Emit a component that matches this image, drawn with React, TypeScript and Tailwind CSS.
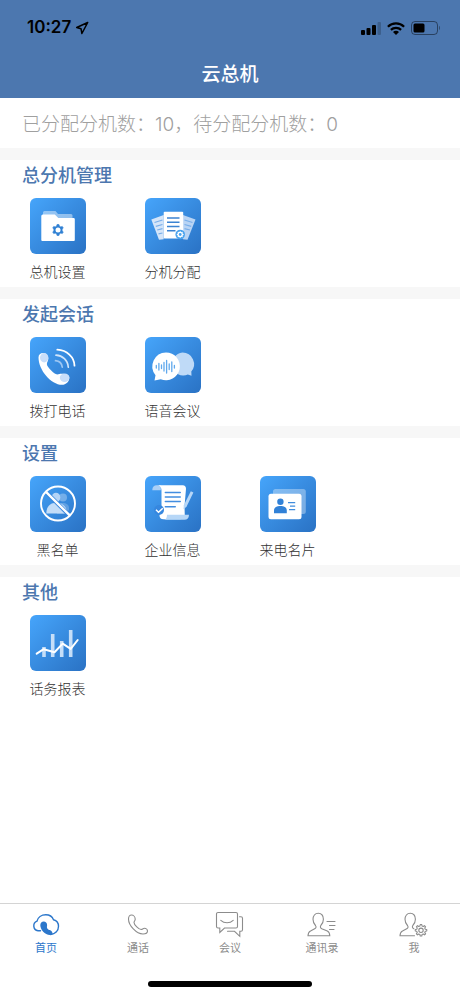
import { useState } from 'react'
import type { ReactNode } from 'react'

function gearPoints(cx: number, cy: number, outer: number, inner: number, teeth: number) {
  const step = (Math.PI * 2) / teeth
  const points: string[] = []
  for (let i = 0; i < teeth; i++) {
    const a = i * step - Math.PI / 2
    const corners = [
      [a - step * 0.3, inner],
      [a - step * 0.17, outer],
      [a + step * 0.17, outer],
      [a + step * 0.3, inner],
    ]
    corners.forEach(([angle, r]) => {
      points.push(`${(cx + Math.cos(angle) * r).toFixed(2)},${(cy + Math.sin(angle) * r).toFixed(2)}`)
    })
  }
  return points.join(' ')
}

const folderIcon = (
  <>
    <path d="M13 20v-5.5a1.5 1.5 0 0 1 1.5-1.5h11l2.5 3h13a1.5 1.5 0 0 1 1.5 1.5V22H13z" fill="#fff" opacity=".45" />
    <path d="M11.3 18a1.5 1.5 0 0 1 1.5-1.5h12l3.5 3.5h15.2a1.3 1.3 0 0 1 1.3 1.3V42a1 1 0 0 1-1 1H12.3a1 1 0 0 1-1-1z" fill="#fff" />
    <polygon points={gearPoints(28, 32, 5.6, 4.2, 6)} fill="#2f80d3" stroke="#2f80d3" strokeWidth=".6" strokeLinejoin="round" />
    <circle cx="28" cy="32" r="2.5" fill="#fff" />
  </>
)

const sheetsIcon = (
  <>
    <path d="M6.3 21.5 18.7 17v24.3l-4.7.5z" fill="#d4e5f9" />
    <path d="M50.5 21.5 38 17v24.3l4.5.5z" fill="#b9d4f4" />
    <path d="m9.5 24.5 8-2.5M10.8 28.3l6.7-1.8M12.2 32l5.3-1.3M13.5 35.8l4-.8M47.5 24.5l-8-2.5M46.2 28.3l-6.7-1.8M45 32l-5.5-1.3" stroke="#78aeea" strokeWidth="1.2" />
    <rect x="18.7" y="13.7" width="19.5" height="26.8" rx="1" fill="#fff" />
    <path d="M22 20h12.5M22 24.3h12.5M22 28.5h12.5M22 32.8h8.5" stroke="#3b83d2" strokeWidth="1.5" />
    <circle cx="35.2" cy="36.5" r="4.8" fill="#4aa3ee" />
    <polygon points={gearPoints(35.2, 36.5, 3.4, 2.7, 8)} fill="#fff" />
    <circle cx="35.2" cy="36.5" r="1.4" fill="#4aa3ee" />
  </>
)

const callIcon = (
  <>
    <path d="M8.5 20.5c0-3 2-4.500 4.500-4.500 3 0 5.300 2.500 5.300 5.500 0 2-.8 3-1.300 4.500-.5 1.700.5 3.500 2.500 5.700 2.300 2.500 4.800 5 6.800 5.600 2 .5 3.200-.6 5.200-.6 4 0 7.800.8 7.800 4 0 3.800-3.300 7.100-7.300 7.100C21 47.800 8.500 33 8.500 20.500z" fill="#fff" />
    <ellipse cx="14.2" cy="20.8" rx="4.2" ry="4.7" fill="#c9defa" />
    <ellipse cx="34.6" cy="40.8" rx="4.8" ry="4.2" fill="#c9defa" />
    <path d="M27.3 12.7c9.5.5 17 7.3 17.2 16" stroke="#fff" strokeWidth="1.8" strokeLinecap="round" />
    <path d="M26 18.2c6.500.3 11.800 5 12.300 12" stroke="#d2e5fa" strokeWidth="1.7" strokeLinecap="round" />
    <path d="M25.5 23.7c3.500.3 6.300 2.800 6.800 6.500" stroke="#9cc6f3" strokeWidth="1.7" strokeLinecap="round" />
  </>
)

const voiceIcon = (
  <>
    <path d="M37.5 15.5a11.5 11.5 0 0 1 8.800 18.900l.2 4.400-3.700-1.200A11.5 11.5 0 1 1 37.500 15.500z" fill="#bfdaf7" />
    <path d="M21 15.5a13.9 13.9 0 1 1-5.200 26.800l-6.300 1.200 1-5.300A13.9 13.9 0 0 1 21 15.5z" fill="#fff" />
    <path d="M11.3 28.5v2.500M13.900 26.500v6.500M16.500 28v3.500M19 25.500v8.500M21.600 23.500v12.500M24.200 27v5.500M26.800 25v9.500M29.400 28.500v2.500" stroke="#60a9ed" strokeWidth="1.3" strokeLinecap="round" />
  </>
)

const blockIcon = (
  <>
    <circle cx="33" cy="21.5" r="4" fill="#fff" opacity=".3" />
    <path d="M27 38v-6c0-3.500 3-5 6-5s6 1.500 6 5v2a14 14 0 0 1-4 4z" fill="#fff" opacity=".22" />
    <ellipse cx="26" cy="21.5" rx="4.3" ry="4.8" fill="#b5d4f6" />
    <path d="M16.3 37.500c0-6.500 3.500-10.700 10-10.700s10.700 4.200 10.700 10.700z" fill="#c3ddf8" />
    <path d="M17 17 39 39" stroke="#3685dc" strokeWidth="4" />
    <circle cx="28" cy="27.5" r="17" stroke="#fff" strokeWidth="1.9" />
    <path d="M15.7 15.7 40 39.7" stroke="#fff" strokeWidth="2.4" />
  </>
)

const scrollIcon = (
  <>
    <path d="M7.3 14.2c0-3 1.700-4.900 4.500-4.900h4v4.900z" fill="#a9cff6" />
    <path d="M13.3 9.3h24.500c2 0 3.200 1.300 3.200 3.500l-1.500 17.500.3 9.500-4.300 3.500H18.500c-2.700 0-4-1.600-4-4V37l2-3V14.500c0-2.500-1-4.500-3.200-5.200z" fill="#fff" />
    <path d="M22 38.700h22c0 3.200-1.800 5-4.500 5H18.500c2.500 0 3.500-2 3.500-5z" fill="#b7d7f7" />
    <path d="M20.3 16.500h15M20.300 21h15M20.300 25.500h15M20.300 30.700h10" stroke="#428de0" strokeWidth="1.4" strokeLinecap="round" />
    <path d="m45.800 15.300 2.600 1.200-6.900 14.300-3 2.400.3-3.900z" fill="#b7d7f7" />
    <circle cx="14" cy="34" r="5" fill="#3687df" />
    <path d="m11 33.800 2.500 2.400 4.300-4" stroke="#fff" strokeWidth="1.5" />
  </>
)

const cardIcon = (
  <>
    <rect x="13" y="13" width="32.8" height="25" rx="2.5" fill="#fff" opacity=".35" />
    <rect x="8.5" y="17.7" width="33" height="25.5" rx="2.5" fill="#fff" />
    <circle cx="20.4" cy="25.7" r="3.2" fill="#3181d7" />
    <path d="M14 37.2v-2.700c0-3 2.700-4.500 6.400-4.500s6.400 1.500 6.400 4.500v2.700z" fill="#3181d7" />
    <path d="M28 26.700h7.200M30 30.200h5.200M29 33.700h6.200" stroke="#3f8cdd" strokeWidth="1.3" />
  </>
)

const chartIcon = (
  <>
    <path d="M14 32v10M22.700 19v23M31.700 26v16M40.700 15v27" stroke="#c5def8" strokeWidth="3.6" />
    <path d="m6.700 38.700 7-4.500 10.800 3 8.200-8.600 8 5.300 7-8.900" stroke="#fff" strokeWidth="2" strokeLinejoin="round" strokeLinecap="round" />
  </>
)

interface Feature {
  label: string
  icon: ReactNode
}

const SECTIONS: { title: string; items: Feature[] }[] = [
  {
    title: '总分机管理',
    items: [
      { label: '总机设置', icon: folderIcon },
      { label: '分机分配', icon: sheetsIcon },
    ],
  },
  {
    title: '发起会话',
    items: [
      { label: '拨打电话', icon: callIcon },
      { label: '语音会议', icon: voiceIcon },
    ],
  },
  {
    title: '设置',
    items: [
      { label: '黑名单', icon: blockIcon },
      { label: '企业信息', icon: scrollIcon },
      { label: '来电名片', icon: cardIcon },
    ],
  },
  {
    title: '其他',
    items: [{ label: '话务报表', icon: chartIcon }],
  },
]

const personPath =
  'M8.500 14.500C7 13 6 11 6 8.300 6 4.800 8 2.300 11.200 2.300s5.200 2.500 5.200 6c0 2.700-1 4.700-2.600 6.200-.8 1.300-.4 2.500 1 3.200'

const TABS: Feature[] = [
  {
    label: '首页',
    icon: (
      <>
        <path d="M9.5 19.800H7A5 5 0 0 1 6 10.200C6.800 6.300 10.500 3.700 14.800 3.700c3.700 0 6.500 1.900 7.700 5 3.200.8 5 3.300 5 6.600 0 4.800-3.500 7.700-8 8.200" strokeWidth="1.4" />
        <path d="M9.3 14.300c0-2.300 1.500-3.700 3.400-3.700s3.400 1.500 3.400 3.400c0 1.500-.5 2.300.2 3.400.6.9 1.400 1.300 2.500 1.700 2 .8 3 2.500 2.600 4.400-5.900 2.300-12.100-4.300-12.100-9.200z" fill="currentColor" stroke="none" />
      </>
    ),
  },
  {
    label: '通话',
    icon: (
      <path d="M5.5 8c0-2.500 1.200-4 3-4 2 0 3.700 2 3.700 4.200 0 1.500-1.200 2-1.200 3.300 0 2.200 5 7 7.200 7 1.200 0 1.800-1.200 3.300-1.200 1.500 0 3 1.300 3 2.700 0 1.800-2 3-4.500 3C13.500 23 5.500 14.500 5.500 8z" />
    ),
  },
  {
    label: '会议',
    icon: (
      <>
        <path d="M3 1.500h18a1.500 1.500 0 0 1 1.500 1.500v12.500A1.500 1.500 0 0 1 21 17H9.500l-4.700 4.500V17H3a1.500 1.500 0 0 1-1.500-1.500V3A1.500 1.500 0 0 1 3 1.500z" />
        <path d="M5.800 9.300c3.500 3.200 9 3.200 12.400 0M24.500 5.800H26a1.500 1.500 0 0 1 1.500 1.500v11.500a1.500 1.500 0 0 1-1.500 1.500h-1.200v5l-5.300-5h-7" />
      </>
    ),
  },
  {
    label: '通讯录',
    icon: (
      <>
        <path d={personPath + 'l5.500 2.300c1.700.8 2.400 2 2.500 4.700H1c.1-2.700.8-3.900 2.500-4.700L7.700 17.700c1.400-.7 1.800-1.900.8-3.200'} />
        <path d="M20 10.500h8M22.500 14.500H28M22.500 18.500H27" />
      </>
    ),
  },
  {
    label: '我',
    icon: (
      <>
        <path d={personPath} />
        <path d="M15.500 24.700H1c.1-2.700.8-3.900 2.500-4.700l4.200-2.300c1.400-.7 1.800-1.900.8-3.200" />
        <polygon points={gearPoints(22, 19.3, 5.8, 4.4, 8)} strokeLinejoin="round" />
        <circle cx="22" cy="19.3" r="2.2" />
      </>
    ),
  },
]

function StatusBar() {
  return (
    <div className="flex h-14 items-center justify-between pr-5 pl-[27px] text-black">
      <div className="flex items-center gap-1">
        <span className="font-[Inter] text-[17px] font-semibold">10:27</span>
        <svg width="14" height="14" viewBox="0 0 14 14" fill="none" stroke="currentColor" strokeWidth="1.5" strokeLinejoin="round">
          <path d="M12.700 1.500 1.700 6.500l4.300 1.200.9 4.800z" />
        </svg>
      </div>
      <div className="flex items-center gap-1.5">
        <svg width="20" height="13" viewBox="0 0 20 13" fill="currentColor">
          <rect y="8" width="4" height="5" rx="1" />
          <rect x="5.5" y="6" width="4" height="7" rx="1" />
          <rect x="11" y="3" width="4" height="10" rx="1" />
          <rect x="16.5" width="3.5" height="13" rx="1" opacity=".2" />
        </svg>
        <svg width="18" height="13" viewBox="0 0 18 13" fill="none" stroke="currentColor" strokeWidth="2.2">
          <path d="M.9 4.700a11.500 11.500 0 0 1 16.200 0M3.900 7.900a7.200 7.200 0 0 1 10.200 0" />
          <path d="M6 10a4.200 4.200 0 0 1 6 0l-3 3z" fill="currentColor" stroke="none" />
        </svg>
        <svg width="29" height="14" viewBox="0 0 29 14" fill="currentColor">
          <rect x=".5" y=".5" width="26" height="13" rx="3.5" fill="none" stroke="currentColor" opacity=".45" />
          <rect x="2.5" y="2.5" width="11" height="9" rx="1.5" />
          <path d="M28 4.800c1 .6 1 3.800 0 4.400z" opacity=".5" />
        </svg>
      </div>
    </div>
  )
}

function FeatureButton({ label, icon }: Feature) {
  return (
    <button type="button" className="flex flex-col items-center gap-[7px]">
      <span className="size-14 rounded-md bg-linear-to-br from-[#46a5fb] to-[#2a72c4]">
        <svg className="size-14" viewBox="0 0 56 56" fill="none">
          {icon}
        </svg>
      </span>
      <span className="text-[14px] leading-5 font-light text-[#333]">{label}</span>
    </button>
  )
}

export default function App() {
  const [active, setActive] = useState('首页')

  return (
    <div className="flex min-h-screen flex-col bg-white font-['Noto_Sans_CJK_SC',sans-serif]">
      <header className="bg-[#4c77af]">
        <StatusBar />
        <h1 className="pt-[3px] pb-[11px] text-center text-[19px] leading-7 font-medium text-white">云总机</h1>
      </header>

      <main className="flex-1">
        <p className="px-[22px] pt-1 font-[Inter,'Noto_Sans_CJK_SC',sans-serif] text-[19px] leading-[46px] font-light text-[#a0a0a0]">
          已分配分机数：10，待分配分机数：0
        </p>
        {SECTIONS.map((section) => (
          <section key={section.title} className="border-t-12 border-[#f7f7f7] pb-[6px]">
            <h2 className="px-[22px] pt-0.5 pb-3 text-[18px] leading-6 font-medium text-[#4c77af]">{section.title}</h2>
            <div className="grid grid-cols-4">
              {section.items.map((item) => (
                <FeatureButton key={item.label} {...item} />
              ))}
            </div>
          </section>
        ))}
      </main>

      <nav className="border-t border-[#d4d4d4] pt-[7px]">
        <div className="grid grid-cols-5">
          {TABS.map((tab) => (
            <button
              key={tab.label}
              type="button"
              onClick={() => setActive(tab.label)}
              className={['flex flex-col items-center', tab.label === active ? 'text-[#2c77cb]' : 'text-[#8c8c8c]'].join(' ')}
            >
              <svg width="30" height="28" viewBox="0 0 30 28" fill="none" stroke="currentColor" strokeWidth="1.1" strokeLinecap="round">
                {tab.icon}
              </svg>
              <span className="text-[11px] leading-4">{tab.label}</span>
            </button>
          ))}
        </div>
        <div className="flex justify-center pt-[26px] pb-[9px]">
          <div className="h-[6px] w-[164px] rounded-full bg-black" />
        </div>
      </nav>
    </div>
  )
}
